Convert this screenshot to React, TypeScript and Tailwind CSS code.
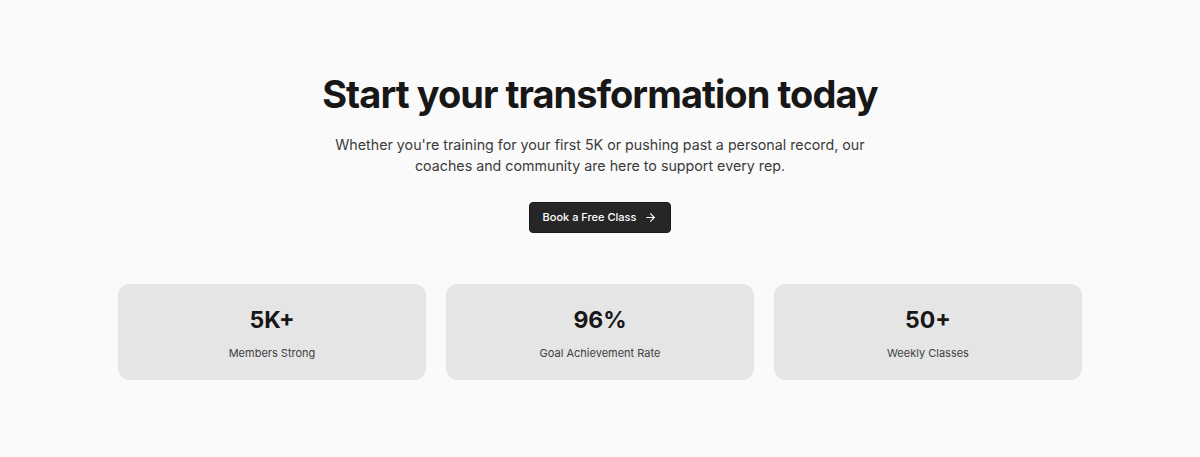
import React from "react";

const stats = [
  { value: "5K+", label: "Members Strong" },
  { value: "96%", label: "Goal Achievement Rate" },
  { value: "50+", label: "Weekly Classes" },
];

export default function App() {
  return (
    <div
      className="min-h-[457px] w-full bg-[#fafafa] text-[#171717]"
      style={{ fontFamily: "Inter, 'Noto Sans', sans-serif" }}
    >
      <section className="mx-auto flex max-w-[964px] flex-col items-center pt-[73px] pb-16">
        <h1 className="text-[38px] leading-[42px] font-bold tracking-tight text-[#171717]">
          Start your transformation today
        </h1>
        <p className="mt-[19px] max-w-[540px] text-center text-[14.25px] leading-[21px] text-[#3a3a3a]">
          Whether you're training for your first 5K or pushing past a personal record, our coaches and community are here to support every rep.
        </p>
        <button className="mt-[26px] flex h-[31px] items-center gap-2 rounded-[4px] border border-[#1a1a1a] bg-[#262626] px-[13px] text-[11px] font-medium text-white">
          Book a Free Class
          <svg width="13" height="13" viewBox="0 0 24 24" fill="none" stroke="currentColor" strokeWidth="2" strokeLinecap="round" strokeLinejoin="round">
            <path d="M5 12h14" />
            <path d="m12 5 7 7-7 7" />
          </svg>
        </button>
        <div className="mt-[51px] grid w-full grid-cols-3 gap-5">
          {stats.map((s) => (
            <div key={s.label} className="flex h-[96px] flex-col items-center rounded-xl bg-[#e5e5e5] pt-[20px]">
              <div className="text-[23px] leading-8 font-bold text-[#171717]">{s.value}</div>
              <div className="mt-[9px] text-[11px] leading-4 text-[#404040]">{s.label}</div>
            </div>
          ))}
        </div>
      </section>
    </div>
  );
}
